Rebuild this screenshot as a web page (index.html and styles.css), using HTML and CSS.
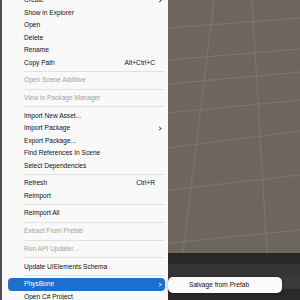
FILE: index.html
```html
<!DOCTYPE html>
<html lang="en">
<head>
    <meta charset="UTF-8">
    <title>Assets context menu</title>
    <link rel="stylesheet" href="styles.css">
</head>
<body>
    <div class="editor">
        <div class="scene">
            <svg class="grid" viewBox="0 0 300 253" width="300" height="253">
                <g stroke="#7d7772" stroke-width="1" fill="none">
                    <line x1="214" y1="0" x2="183" y2="253"/>
                    <line x1="252" y1="0" x2="267" y2="253"/>
                    <line x1="168" y1="28" x2="300" y2="18"/>
                    <line x1="168" y1="60" x2="300" y2="49"/>
                    <line x1="168" y1="84" x2="300" y2="72"/>
                    <line x1="168" y1="113" x2="300" y2="100"/>
                    <line x1="168" y1="148" x2="300" y2="131"/>
                    <line x1="168" y1="190" x2="300" y2="175"/>
                    <line x1="168" y1="243" x2="300" y2="230"/>
                </g>
            </svg>
        </div>
        <div class="bar bar-a"></div>
        <div class="bar bar-b"></div>
        <div class="bar bar-c"></div>
        <div class="bar bar-d"></div>
    </div>

    <ul class="menu">
        <li class="item">Create <span class="arrow"></span></li>
        <li class="item">Show in Explorer</li>
        <li class="item">Open</li>
        <li class="item">Delete</li>
        <li class="item">Rename</li>
        <li class="item">Copy Path <span class="key">Alt+Ctrl+C</span></li>
        <li class="sep"></li>
        <li class="item off">Open Scene Additive</li>
        <li class="sep"></li>
        <li class="item off">View in Package Manager</li>
        <li class="sep"></li>
        <li class="item">Import New Asset...</li>
        <li class="item">Import Package <span class="arrow"></span></li>
        <li class="item">Export Package...</li>
        <li class="item">Find References In Scene</li>
        <li class="item">Select Dependencies</li>
        <li class="sep"></li>
        <li class="item">Refresh <span class="key">Ctrl+R</span></li>
        <li class="item">Reimport</li>
        <li class="sep"></li>
        <li class="item">Reimport All</li>
        <li class="sep"></li>
        <li class="item off">Extract From Prefab</li>
        <li class="sep"></li>
        <li class="item off">Run API Updater...</li>
        <li class="sep"></li>
        <li class="item">Update UIElements Schema</li>
        <li class="sep"></li>
        <li class="item active">PhysBone <span class="arrow"></span></li>
        <li class="item">Open C# Project</li>
    </ul>

    <div class="submenu">Salvage from Prefab</div>
</body>
</html>
```

FILE: styles.css
```css
body {
    margin: 0;
    width: 300px;
    height: 300px;
    overflow: hidden;
    position: relative;
    background-color: #4e4e4e;
    font-family: "Liberation Sans", Arial, sans-serif;
}

.editor {
    margin-left: 2px;
    height: 300px;
    display: grid;
    grid-template-rows: 253px 11px 13px 12px 1fr;
}

.scene {
    background-color: #6c665f;
    overflow: hidden;
}

.grid {
    display: block;
    margin-left: -2px;
}

.bar-a { background-color: #282828; }
.bar-b { background-color: #353535; }
.bar-c { background-color: #3a3a3a; }
.bar-d { background-color: #2a2a2a; }

.menu {
    position: absolute;
    top: -6px;
    left: 2px;
    width: 166px;
    margin: 0;
    padding: 0;
    list-style: none;
    background-color: #f9f9f9;
}

.item {
    position: relative;
    height: 12.5px;
    line-height: 12.5px;
    padding-left: 22px;
    font-size: 6.6px;
    color: #101010;
    white-space: nowrap;
}

.item.off {
    color: #a2a2a2;
}

.item.active {
    margin: 0 3px 0 6px;
    padding-left: 16px;
    border-radius: 4px;
    background-color: #1f6fd1;
    color: #ffffff;
}

.sep {
    height: 5.2px;
    position: relative;
}

.sep::after {
    content: "";
    position: absolute;
    left: 22px;
    right: 3px;
    top: 2px;
    height: 1px;
    background-color: #e2e2e2;
}

.key {
    position: absolute;
    right: 13px;
    top: 0;
}

.arrow {
    position: absolute;
    right: 7px;
    top: 4.5px;
    width: 2px;
    height: 2px;
    border-top: 1px solid #555;
    border-right: 1px solid #555;
    transform: rotate(45deg);
}

.active .arrow {
    right: 4px;
    border-color: #cfe0f6;
}

.submenu {
    position: absolute;
    left: 168px;
    top: 277px;
    width: 93px;
    height: 16px;
    line-height: 16px;
    padding-left: 21px;
    border-radius: 5px;
    background-color: #fbfbfb;
    box-shadow: 0 1px 4px rgba(0, 0, 0, 0.35);
    font-size: 6.6px;
    color: #101010;
}
```
